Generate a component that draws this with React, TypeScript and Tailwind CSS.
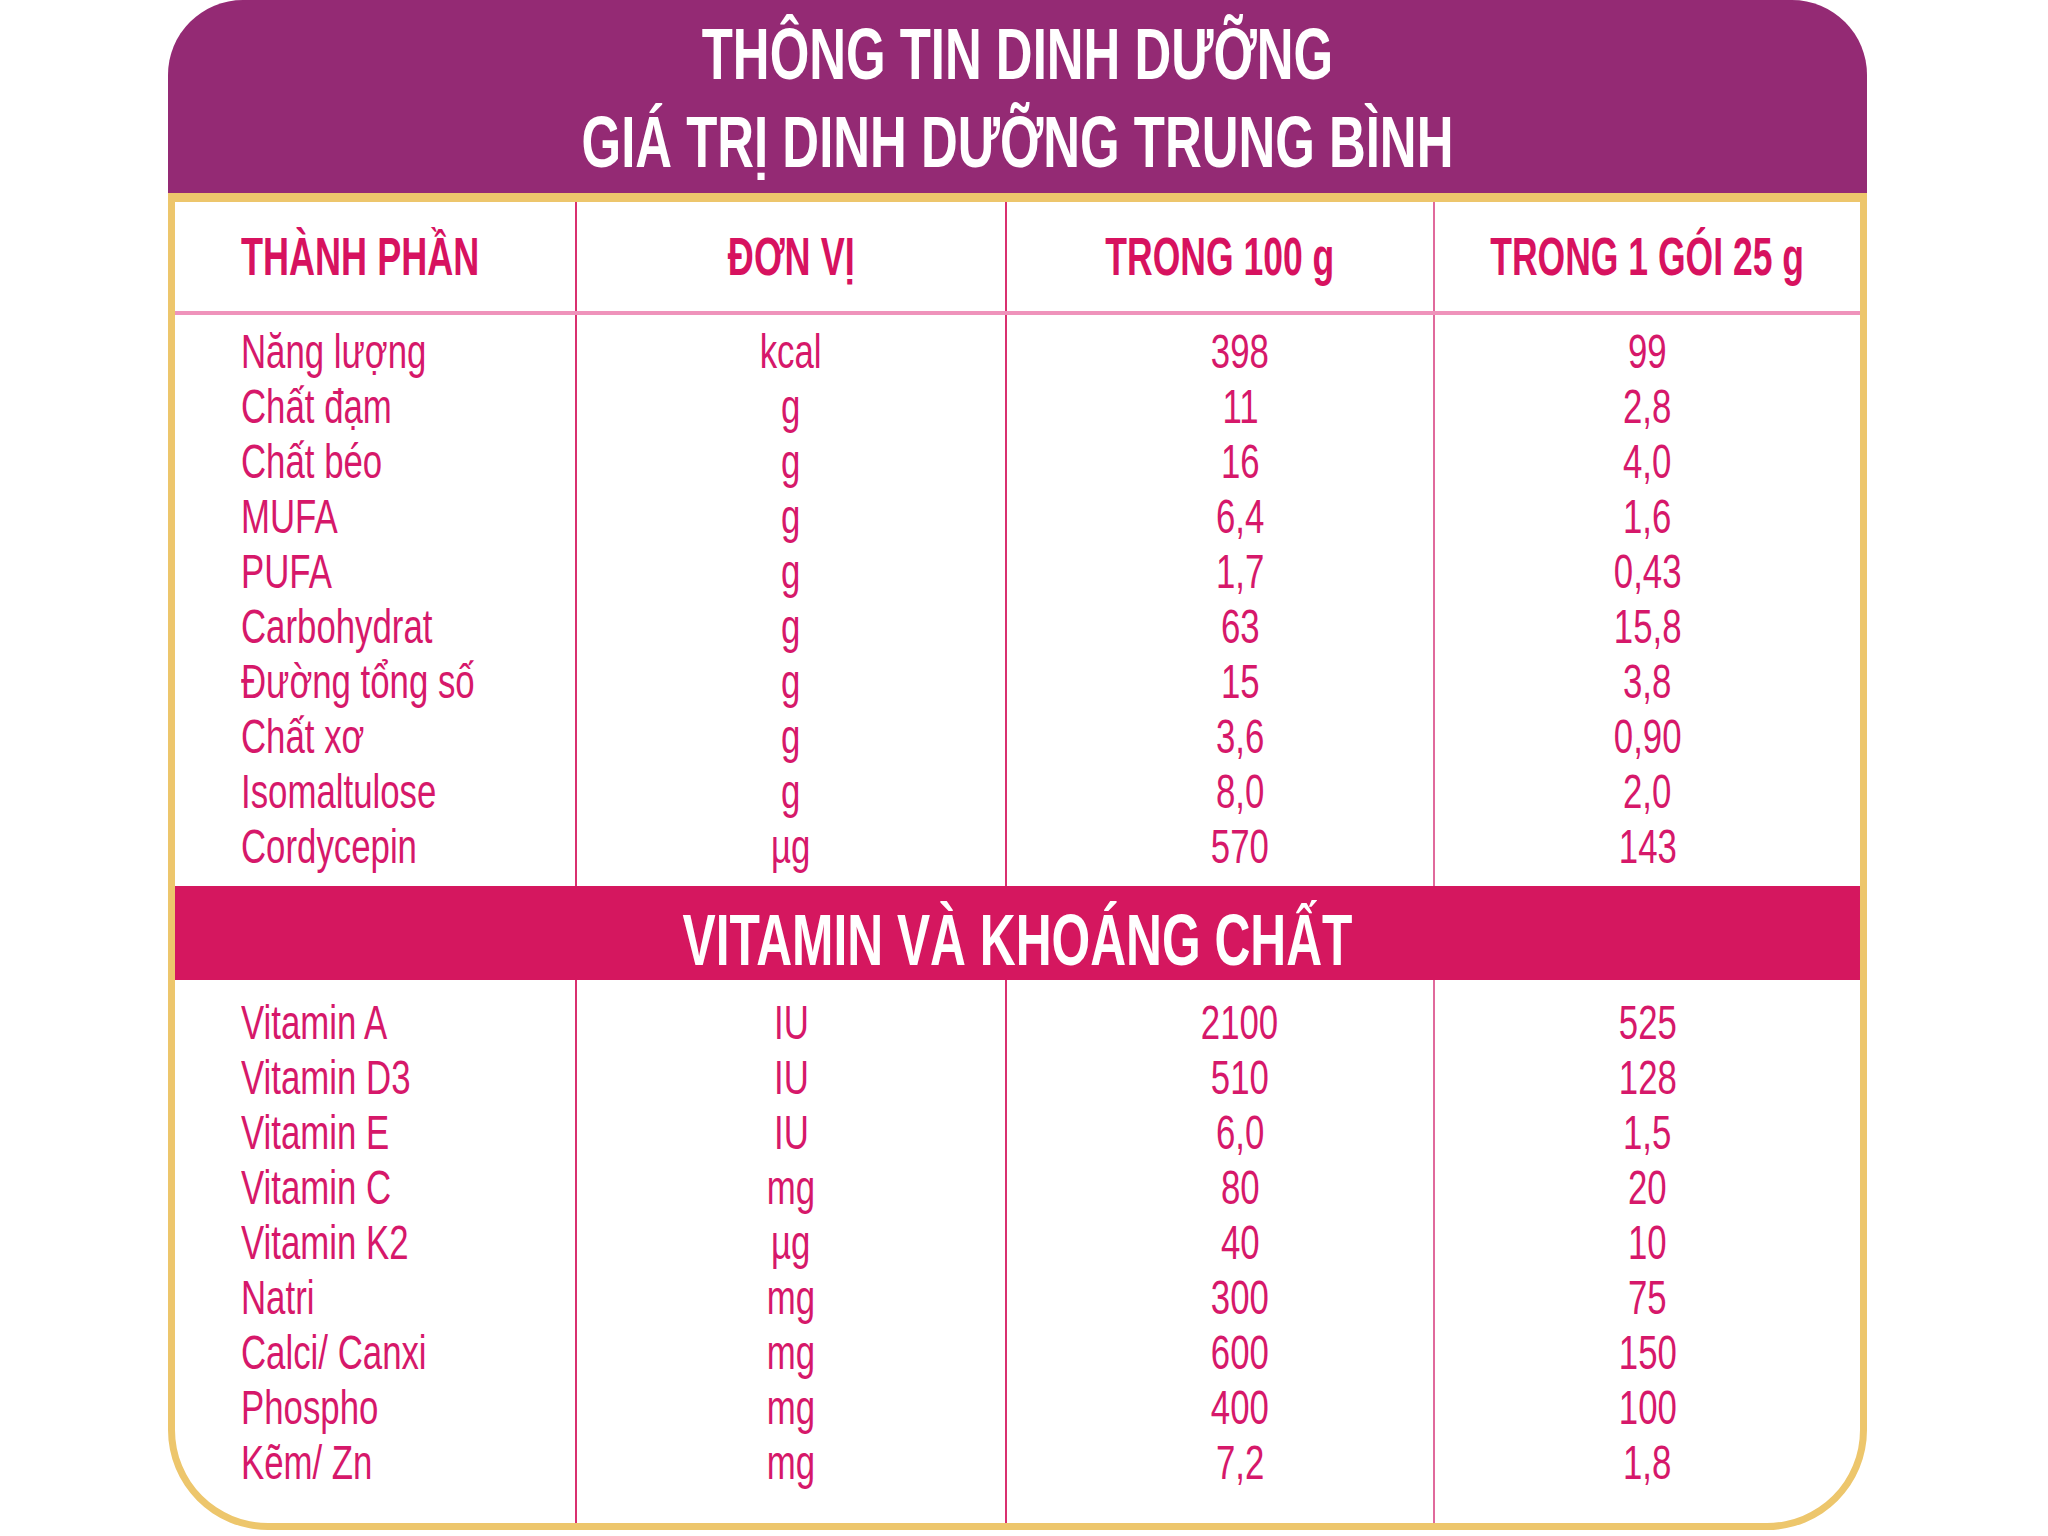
import React from "react";

const NUTRIENTS: [string, string, string, string][] = [
  ["Năng lượng", "kcal", "398", "99"],
  ["Chất đạm", "g", "11", "2,8"],
  ["Chất béo", "g", "16", "4,0"],
  ["MUFA", "g", "6,4", "1,6"],
  ["PUFA", "g", "1,7", "0,43"],
  ["Carbohydrat", "g", "63", "15,8"],
  ["Đường tổng số", "g", "15", "3,8"],
  ["Chất xơ", "g", "3,6", "0,90"],
  ["Isomaltulose", "g", "8,0", "2,0"],
  ["Cordycepin", "µg", "570", "143"],
];

const VITAMINS: [string, string, string, string][] = [
  ["Vitamin A", "IU", "2100", "525"],
  ["Vitamin D3", "IU", "510", "128"],
  ["Vitamin E", "IU", "6,0", "1,5"],
  ["Vitamin C", "mg", "80", "20"],
  ["Vitamin K2", "µg", "40", "10"],
  ["Natri", "mg", "300", "75"],
  ["Calci/ Canxi", "mg", "600", "150"],
  ["Phospho", "mg", "400", "100"],
  ["Kẽm/ Zn", "mg", "7,2", "1,8"],
];

const COLS = "grid grid-cols-[402px_430px_428px_minmax(0,1fr)]";

// no condensed face installed, so the narrow print type is squeezed with scale-x
const Section = ({
  rows,
  className,
}: {
  rows: [string, string, string, string][];
  className: string;
}) => (
  <div className={`${COLS} text-[49px] leading-[55px] text-[#d6186a]`}>
    <div className={`flex flex-col border-r-2 border-[#d9306f] pl-[66px] ${className}`}>
      {rows.map((r) => (
        <span key={r[0]} className="origin-left scale-x-[0.71] whitespace-nowrap">
          {r[0]}
        </span>
      ))}
    </div>
    <div className={`flex flex-col items-center border-r-2 border-[#d9306f] ${className}`}>
      {rows.map((r) => (
        <span key={r[0]} className="scale-x-[0.71]">
          {r[1]}
        </span>
      ))}
    </div>
    <div className={`flex flex-col items-center border-r-2 border-[#e06a9c] pl-[40px] ${className}`}>
      {rows.map((r) => (
        <span key={r[0]} className="scale-x-[0.71]">
          {r[2]}
        </span>
      ))}
    </div>
    <div className={`flex flex-col items-center ${className}`}>
      {rows.map((r) => (
        <span key={r[0]} className="scale-x-[0.71]">
          {r[3]}
        </span>
      ))}
    </div>
  </div>
);

export default function App() {
  return (
    <div className="min-h-[1536px] w-[2048px] bg-white font-['Liberation_Sans',Arial,sans-serif]">
      <div className="ml-[168px] w-[1699px]">
        {/* Title */}
        <div className="h-[193px] rounded-t-[75px] bg-[#942a74] pt-[10px] text-center text-[72px] font-bold leading-[88px] whitespace-nowrap text-white">
          <div className="scale-x-[0.707]">THÔNG TIN DINH DƯỠNG</div>
          <div className="scale-x-[0.707]">GIÁ TRỊ DINH DƯỠNG TRUNG BÌNH</div>
        </div>

        {/* Table */}
        <div className="rounded-b-[100px] border-[7px] border-t-[9px] border-[#edc66c] bg-white">
          <div className={`${COLS} h-[113px] border-b-4 border-[#ef93bb] text-[53px] font-bold leading-none whitespace-nowrap text-[#d7125f]`}>
            <div className="flex items-center border-r-2 border-[#d9306f] pl-[66px]">
              <span className="origin-left scale-x-[0.68]">THÀNH PHẦN</span>
            </div>
            <div className="flex items-center justify-center border-r-2 border-[#d9306f]">
              <span className="scale-x-[0.68]">ĐƠN VỊ</span>
            </div>
            <div className="flex items-center justify-center border-r-2 border-[#e06a9c]">
              <span className="scale-x-[0.67]">TRONG 100 g</span>
            </div>
            <div className="flex items-center justify-center">
              <span className="shrink-0 scale-x-[0.67]">TRONG 1 GÓI 25 g</span>
            </div>
          </div>

          <Section rows={NUTRIENTS} className="pt-[9px] pb-[12px]" />

          <div className="h-[94px] bg-[#d5175f] pt-[14px] text-center text-[72px] font-bold leading-[80px] whitespace-nowrap text-white">
            <div className="scale-x-[0.69]">VITAMIN VÀ KHOÁNG CHẤT</div>
          </div>

          <Section rows={VITAMINS} className="pt-[15px] pb-[33px]" />
        </div>
      </div>
    </div>
  );
}
